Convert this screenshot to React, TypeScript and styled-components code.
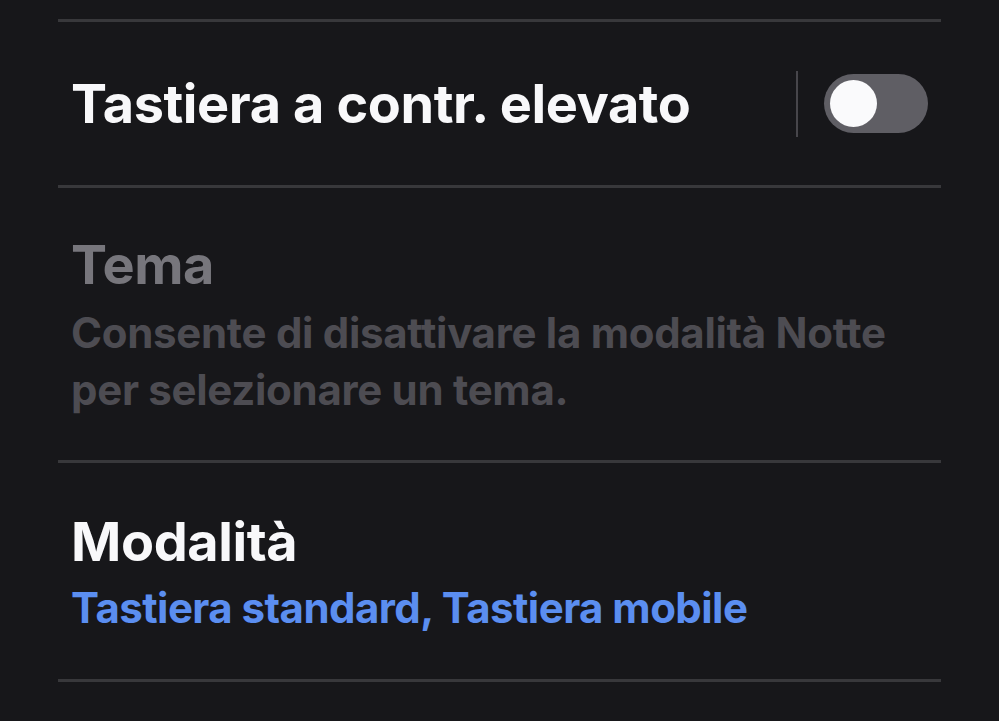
import React, { useState } from 'react';
import styled, { createGlobalStyle } from 'styled-components';

const GlobalStyle = createGlobalStyle`
  html, body {
    margin: 0;
    padding: 0;
    background: #17171a;
  }
  body {
    font-family: Inter, "Noto Sans", sans-serif;
    -webkit-font-smoothing: antialiased;
  }
`;

const Page = styled.div`
  height: 721px;
  overflow: hidden;
  background: #17171a;
  padding: 19px 58px 0 58px;
  box-sizing: border-box;
`;

const Divider = styled.div`
  height: 3px;
  background: #38383b;
`;

const Row = styled.div<{ $top?: number; $bottom?: number; $height?: number }>`
  box-sizing: border-box;
  padding: ${(p) => p.$top ?? 0}px 13px ${(p) => p.$bottom ?? 0}px 13px;
  ${(p) => (p.$height ? `height: ${p.$height}px;` : '')}
  display: flex;
  align-items: center;
  justify-content: space-between;
`;

const TextBlock = styled.div`
  display: flex;
  flex-direction: column;
`;

const Title = styled.div<{ $disabled?: boolean }>`
  font-size: 54px;
  line-height: 60px;
  font-weight: 700;
  letter-spacing: -0.4px;
  color: ${(p) => (p.$disabled ? '#77767c' : '#f8f8fa')};
`;

const Sub = styled.div<{ $tone: 'muted' | 'accent'; $gap: number }>`
  margin-top: ${(p) => p.$gap}px;
  font-size: 42px;
  line-height: 57px;
  font-weight: 700;
  letter-spacing: ${(p) => (p.$tone === 'accent' ? '-0.55px' : '-0.3px')};
  color: ${(p) => (p.$tone === 'accent' ? '#5b8ef0' : '#4d4c52')};
`;

const Controls = styled.div`
  display: flex;
  align-items: center;
  gap: 26px;
`;

const VSep = styled.div`
  width: 2px;
  height: 66px;
  background: #47464b;
`;

const Track = styled.button<{ $on: boolean }>`
  width: 104px;
  height: 59px;
  border: none;
  border-radius: 30px;
  padding: 0 6px;
  background: ${(p) => (p.$on ? '#5b8ef0' : '#5f5e64')};
  display: flex;
  align-items: center;
  justify-content: ${(p) => (p.$on ? 'flex-end' : 'flex-start')};
  cursor: pointer;
`;

const Knob = styled.span`
  width: 47px;
  height: 47px;
  border-radius: 50%;
  background: #fafafc;
`;

const App = (): JSX.Element => {
  const [on, setOn] = useState(false);

  return (
    <Page>
      <GlobalStyle />
      <Divider />
      <Row $height={163}>
        <Title>Tastiera a contr. elevato</Title>
        <Controls>
          <VSep />
          <Track $on={on} onClick={() => setOn(!on)} aria-label="toggle">
            <Knob />
          </Track>
        </Controls>
      </Row>
      <Divider />
      <Row $top={47} $bottom={42}>
        <TextBlock>
          <Title $disabled>Tema</Title>
          <Sub $tone="muted" $gap={9}>
            Consente di disattivare la modalità Notte
            <br />
            per selezionare un tema.
          </Sub>
        </TextBlock>
      </Row>
      <Divider />
      <Row $top={49} $bottom={43}>
        <TextBlock>
          <Title>Modalità</Title>
          <Sub $tone="accent" $gap={7}>Tastiera standard, Tastiera mobile</Sub>
        </TextBlock>
      </Row>
      <Divider />
    </Page>
  );
};

export default App;
